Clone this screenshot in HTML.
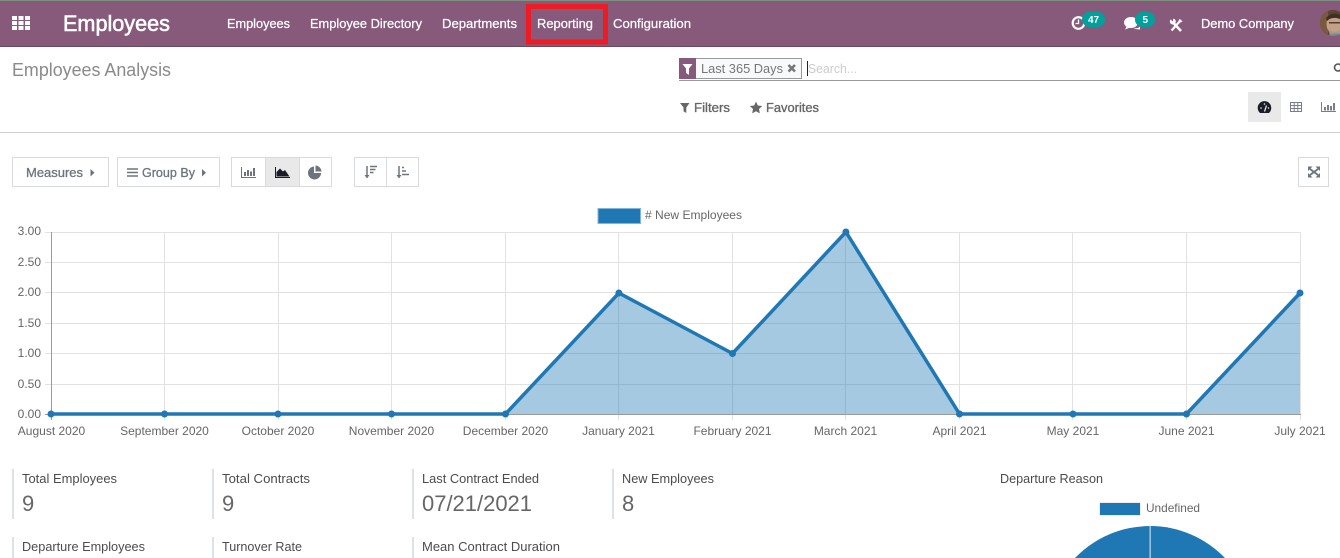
<!DOCTYPE html>
<html><head><meta charset="utf-8"><title>Employees Analysis</title>
<style>
html,body{margin:0;padding:0;background:#fff;width:1340px;height:558px;overflow:hidden}
svg{display:block;position:absolute;left:0;top:0}
text{font-family:"Liberation Sans",sans-serif}
</style></head><body>
<svg width="1340" height="558" viewBox="0 0 1340 558" xmlns="http://www.w3.org/2000/svg">
<rect width="1340" height="558" fill="#fff"/>
<!-- navbar -->
<rect x="0" y="0" width="1340" height="46" fill="#875A7B"/>
<rect x="0" y="0" width="1340" height="1" fill="#7f9080"/>
<rect x="0" y="46" width="1340" height="1" fill="#654a60"/>
<g fill="#fff">
<rect x="12" y="16" width="5" height="4"/><rect x="18.500" y="16" width="5" height="4"/><rect x="25" y="16" width="5" height="4"/>
<rect x="12" y="21" width="5" height="4"/><rect x="18.500" y="21" width="5" height="4"/><rect x="25" y="21" width="5" height="4"/>
<rect x="12" y="26" width="5" height="4"/><rect x="18.500" y="26" width="5" height="4"/><rect x="25" y="26" width="5" height="4"/>
<text x="63" y="31" font-size="22" stroke="#fff" stroke-width=".6" textLength="107" lengthAdjust="spacingAndGlyphs">Employees</text>
<g font-size="13" stroke="#fff" stroke-width=".25">
<text x="227" y="28" textLength="63" lengthAdjust="spacingAndGlyphs">Employees</text>
<text x="310" y="28" textLength="112" lengthAdjust="spacingAndGlyphs">Employee Directory</text>
<text x="442" y="28" textLength="75" lengthAdjust="spacingAndGlyphs">Departments</text>
<text x="537" y="28" textLength="56" lengthAdjust="spacingAndGlyphs">Reporting</text>
<text x="613" y="28" textLength="78" lengthAdjust="spacingAndGlyphs">Configuration</text>
<text x="1201" y="28" textLength="93" lengthAdjust="spacingAndGlyphs">Demo Company</text>
</g>
</g>
<rect x="528.500" y="6.500" width="77" height="35.500" fill="none" stroke="#ed1c24" stroke-width="5"/>
<!-- systray -->
<circle cx="1078.500" cy="23" r="5.800" fill="none" stroke="#fff" stroke-width="2.200"/>
<path d="M1078.500 19.500V23.500H1075.500" fill="none" stroke="#fff" stroke-width="1.300"/>
<rect x="1082" y="12" width="23" height="15" rx="7.500" fill="#00A09D"/>
<text x="1093.500" y="23" font-size="10" font-weight="700" fill="#fff" text-anchor="middle">47</text>
<ellipse cx="1131" cy="22.500" rx="7" ry="5.500" fill="#fff"/>
<path d="M1127 25.500L1125 29.500L1131.500 27Z" fill="#fff"/>
<path d="M1134 28Q1138 29 1140 26.500L1140 29.500L1135 29Z" fill="#fff"/>
<rect x="1135" y="12" width="20" height="15" rx="7.500" fill="#00A09D"/>
<text x="1145.300" y="23" font-size="10" font-weight="700" fill="#fff" text-anchor="middle">5</text>
<path d="M1173 22.500L1181 31" stroke="#fff" stroke-width="2.600" fill="none"/>
<path d="M1181 20L1171.500 30.500" stroke="#fff" stroke-width="2.200" fill="none"/>
<circle cx="1172.800" cy="21.500" r="3" fill="#fff"/>
<path d="M1169.500 18.500L1172.800 21.500L1173.500 18Z" fill="#875A7B"/>
<path d="M1179.500 19L1182.500 21.500L1180.500 22.500L1178.500 20.500Z" fill="#fff"/>
<clipPath id="av"><circle cx="1333" cy="23" r="13"/></clipPath>
<g clip-path="url(#av)">
<rect x="1320" y="10" width="20" height="26" fill="#5e4433"/>
<rect x="1320" y="10" width="8" height="26" fill="#7a5a3e"/>
<ellipse cx="1334" cy="24" rx="7.500" ry="10" fill="#c4a087"/>
<path d="M1326 18Q1333 11 1340 15V19Q1332 16 1327 21Z" fill="#3f3025"/>
<rect x="1329" y="22" width="11" height="1.500" fill="#4b4038"/>
<path d="M1328 29Q1334 34 1340 30V35H1330Z" fill="#a39a90"/>
<path d="M1326 36Q1334 32 1340 34V36Z" fill="#7e8a8e"/>
</g>
<!-- control panel -->
<text x="12" y="76" font-size="18" fill="#8a8a8a" textLength="159" lengthAdjust="spacingAndGlyphs">Employees Analysis</text>
<rect x="679.500" y="58.500" width="122" height="20" fill="#f8f9fb" stroke="#999"/>
<rect x="679" y="58" width="17" height="21" fill="#875A7B"/>
<path d="M682.500 64H692.500L689 68.500V75L686 73V68.500Z" fill="#fff"/>
<text x="701" y="73" font-size="13" fill="#777" textLength="82" lengthAdjust="spacingAndGlyphs">Last 365 Days</text>
<path d="M788.500 65L795 71.500M795 65L788.500 71.500" stroke="#777" stroke-width="2.600"/>
<rect x="807" y="61" width="1" height="15" fill="#222"/>
<text x="808" y="73" font-size="13" fill="#ccc" textLength="49" lengthAdjust="spacingAndGlyphs">Search...</text>
<rect x="679" y="80" width="661" height="1" fill="#999"/>
<circle cx="1338" cy="67.500" r="3.500" fill="none" stroke="#555" stroke-width="1.600"/>
<path d="M680 103H689.500L686.300 107.500V113L683.500 111.300V107.500Z" fill="#666"/>
<text x="694" y="112" font-size="13" fill="#666" stroke="#666" stroke-width=".35" textLength="36" lengthAdjust="spacingAndGlyphs">Filters</text>
<path d="M756 101.500L757.800 105.500L762.200 106L759 109L759.800 113.400L756 111.200L752.200 113.400L753 109L749.800 106L754.200 105.500Z" fill="#666"/>
<text x="766" y="112" font-size="13" fill="#666" stroke="#666" stroke-width=".35" textLength="53" lengthAdjust="spacingAndGlyphs">Favorites</text>
<rect x="1248" y="92" width="33" height="30" fill="#e9e9e9"/>
<path d="M1260 113A6.800 6.800 0 1 1 1269 113Z" fill="#1c1c28"/>
<path d="M1264.500 111.500L1266.500 105.500" stroke="#e9e9e9" stroke-width="1.200"/>
<circle cx="1261" cy="108" r=".8" fill="#e9e9e9"/><circle cx="1264.500" cy="104" r=".8" fill="#e9e9e9"/><circle cx="1268.500" cy="108" r=".8" fill="#e9e9e9"/>
<path d="M1290.500 102.500H1301.500V111.500H1290.500ZM1290.500 105.500H1301.500M1290.500 108.500H1301.500M1294.200 102.500V111.500M1297.800 102.500V111.500" fill="none" stroke="#7c7c90" stroke-width="1"/>
<path d="M1321.500 102V111.500H1336" fill="none" stroke="#6f7f95" stroke-width="1"/>
<rect x="1324" y="107" width="2" height="3.500" fill="#7c7c90"/><rect x="1327" y="105" width="2" height="5.500" fill="#7c7c90"/><rect x="1330" y="106" width="2" height="4.500" fill="#7c7c90"/><rect x="1333" y="103" width="2" height="7.500" fill="#7c7c90"/>
<rect x="0" y="132" width="1340" height="1" fill="#cfcfcf"/>
<!-- buttons -->
<g fill="#fff" stroke="#d8dadd">
<rect x="12.500" y="157.500" width="96" height="29"/>
<rect x="117.500" y="157.500" width="102" height="29"/>
<rect x="231.500" y="157.500" width="100" height="29"/>
<rect x="265.500" y="157.500" width="34" height="29" fill="#e9e9e9"/>
<rect x="354.500" y="157.500" width="64" height="29"/>
<rect x="1298.500" y="157.500" width="30" height="29"/>
</g>
<path d="M386.500 158V186" stroke="#d8dadd"/>
<text x="26" y="177" font-size="13" fill="#6c757d" stroke="#6c757d" stroke-width=".3" textLength="57" lengthAdjust="spacingAndGlyphs">Measures</text>
<path d="M90.500 169V176.500L94.500 172.700Z" fill="#6c757d"/>
<path d="M127 169H138M127 172.500H138M127 176H138" stroke="#6c757d" stroke-width="1.500"/>
<text x="142" y="177" font-size="13" fill="#6c757d" stroke="#6c757d" stroke-width=".3" textLength="53" lengthAdjust="spacingAndGlyphs">Group By</text>
<path d="M202 169V176.500L206 172.700Z" fill="#6c757d"/>
<path d="M241.500 167V177.500H256" fill="none" stroke="#6c757d"/>
<rect x="244" y="172" width="2" height="4" fill="#6c757d"/><rect x="247" y="170" width="2" height="6" fill="#6c757d"/><rect x="250" y="171.500" width="2" height="4.500" fill="#6c757d"/><rect x="253" y="168" width="2" height="8" fill="#6c757d"/>
<path d="M275.500 167V177.500H290" fill="none" stroke="#1c1c28"/>
<path d="M276.500 176.500V172L280 168.500L283 171.500L285 170L289.500 176.500Z" fill="#1c1c28"/>
<path d="M314 166.500A6.500 6.500 0 1 0 321 173H314Z" fill="#6c757d"/>
<path d="M315.500 165.500A6.500 6.500 0 0 1 321.500 171.500H315.500Z" fill="#6c757d"/>
<path d="M367 166V176" stroke="#6c757d" stroke-width="1.500"/><path d="M364.500 175L367 178.500L369.500 175Z" fill="#6c757d"/>
<path d="M370 166.500H377M370 169.500H375.500M370 172.500H373.500" stroke="#6c757d" stroke-width="1.500"/>
<path d="M399 166V176" stroke="#6c757d" stroke-width="1.500"/><path d="M396.500 175L399 178.500L401.500 175Z" fill="#6c757d"/>
<path d="M402 167.500H404M402 171H406M402 174.500H409" stroke="#6c757d" stroke-width="1.500"/>
<path d="M1310 169L1318 175M1318 169L1310 175" stroke="#6c757d" stroke-width="1.800"/>
<path d="M1308 166.500H1312.500L1308 171ZM1320 166.500H1315.500L1320 171ZM1308 177.500H1312.500L1308 173ZM1320 177.500H1315.500L1320 173Z" fill="#6c757d"/>
<!-- chart -->
<rect x="598" y="208.500" width="42.500" height="15" fill="#1f77b4" stroke="#7fb4d9"/>
<text x="645" y="219" font-size="12" fill="#666" textLength="97" lengthAdjust="spacingAndGlyphs"># New Employees</text>
<g stroke="#e2e2e2" stroke-width="1">
<path d="M45 232.500H1301M45 262.500H1301M45 292.500H1301M45 323.500H1301M45 353.500H1301M45 384.500H1301"/>
<path d="M164.500 232V420M278.500 232V420M391.500 232V420M505.500 232V420M618.500 232V420M732.500 232V420M845.500 232V420M959.500 232V420M1072.500 232V420M1186.500 232V420M1300.500 232V420"/>
</g>
<path d="M51.500 232V420" stroke="#9a9a9a"/>
<path d="M45 414.500H1301" stroke="#9a9a9a"/>
<path d="M51 414H505.500L618.900 293L732.500 353.500L845.900 232L959.500 414H1186.500L1300 293V414Z" fill="#1f77b4" fill-opacity=".4"/>
<path d="M51 414H505.500L618.900 293L732.500 353.500L845.900 232L959.500 414H1186.500L1300 293" fill="none" stroke="#1f77b4" stroke-width="3.500"/>
<g fill="#1f77b4">
<circle cx="51" cy="414" r="3.500"/><circle cx="164.500" cy="414" r="3.500"/><circle cx="278" cy="414" r="3.500"/><circle cx="391.500" cy="414" r="3.500"/><circle cx="505.500" cy="414" r="3.500"/><circle cx="618.900" cy="293" r="3.500"/><circle cx="732.500" cy="353.500" r="3.500"/><circle cx="845.900" cy="232" r="3.500"/><circle cx="959.500" cy="414" r="3.500"/><circle cx="1073" cy="414" r="3.500"/><circle cx="1186.500" cy="414" r="3.500"/><circle cx="1300" cy="293" r="3.500"/>
</g>
<g font-size="12" fill="#666" text-anchor="end">
<text x="41" y="235">3.00</text><text x="41" y="266">2.50</text><text x="41" y="296">2.00</text><text x="41" y="327">1.50</text><text x="41" y="357">1.00</text><text x="41" y="388">0.50</text><text x="41" y="418">0.00</text>
</g>
<g font-size="12" fill="#666" text-anchor="middle">
<text x="51.500" y="435">August 2020</text>
<text x="164.500" y="435">September 2020</text>
<text x="278" y="435">October 2020</text>
<text x="391.500" y="435">November 2020</text>
<text x="505.500" y="435">December 2020</text>
<text x="618.500" y="435">January 2021</text>
<text x="732.500" y="435">February 2021</text>
<text x="845.500" y="435">March 2021</text>
<text x="959.500" y="435">April 2021</text>
<text x="1073" y="435">May 2021</text>
<text x="1186.500" y="435">June 2021</text>
<text x="1300" y="435">July 2021</text>
</g>
<!-- KPIs -->
<g fill="#dee2e6">
<rect x="12" y="469" width="2" height="50"/><rect x="212" y="469" width="2" height="50"/><rect x="412" y="469" width="2" height="50"/><rect x="612" y="469" width="2" height="50"/>
<rect x="12" y="537" width="2" height="21"/><rect x="212" y="537" width="2" height="21"/><rect x="412" y="537" width="2" height="21"/>
</g>
<g font-size="13" fill="#4c4c4c">
<text x="22" y="483" textLength="95" lengthAdjust="spacingAndGlyphs">Total Employees</text>
<text x="222" y="483" textLength="88" lengthAdjust="spacingAndGlyphs">Total Contracts</text>
<text x="422" y="483" textLength="117" lengthAdjust="spacingAndGlyphs">Last Contract Ended</text>
<text x="622" y="483" textLength="92" lengthAdjust="spacingAndGlyphs">New Employees</text>
<text x="1000" y="483" textLength="103" lengthAdjust="spacingAndGlyphs">Departure Reason</text>
<text x="22" y="551" textLength="123" lengthAdjust="spacingAndGlyphs">Departure Employees</text>
<text x="222" y="551" textLength="80" lengthAdjust="spacingAndGlyphs">Turnover Rate</text>
<text x="422" y="551" textLength="138" lengthAdjust="spacingAndGlyphs">Mean Contract Duration</text>
</g>
<g font-size="22" fill="#666">
<text x="22" y="511">9</text>
<text x="222" y="511">9</text>
<text x="422" y="511" textLength="110" lengthAdjust="spacingAndGlyphs">07/21/2021</text>
<text x="622" y="511">8</text>
</g>
<rect x="1099.500" y="502.500" width="41" height="13" fill="#1f77b4" stroke="#eee"/>
<text x="1146" y="512" font-size="12" fill="#666" textLength="54" lengthAdjust="spacingAndGlyphs">Undefined</text>
<path d="M1075 558A104 104 0 0 1 1225 558Z" fill="#1f77b4"/>
<rect x="1149.500" y="526" width="1.300" height="32" fill="#b5d3e8"/>
</svg>
</body></html>
